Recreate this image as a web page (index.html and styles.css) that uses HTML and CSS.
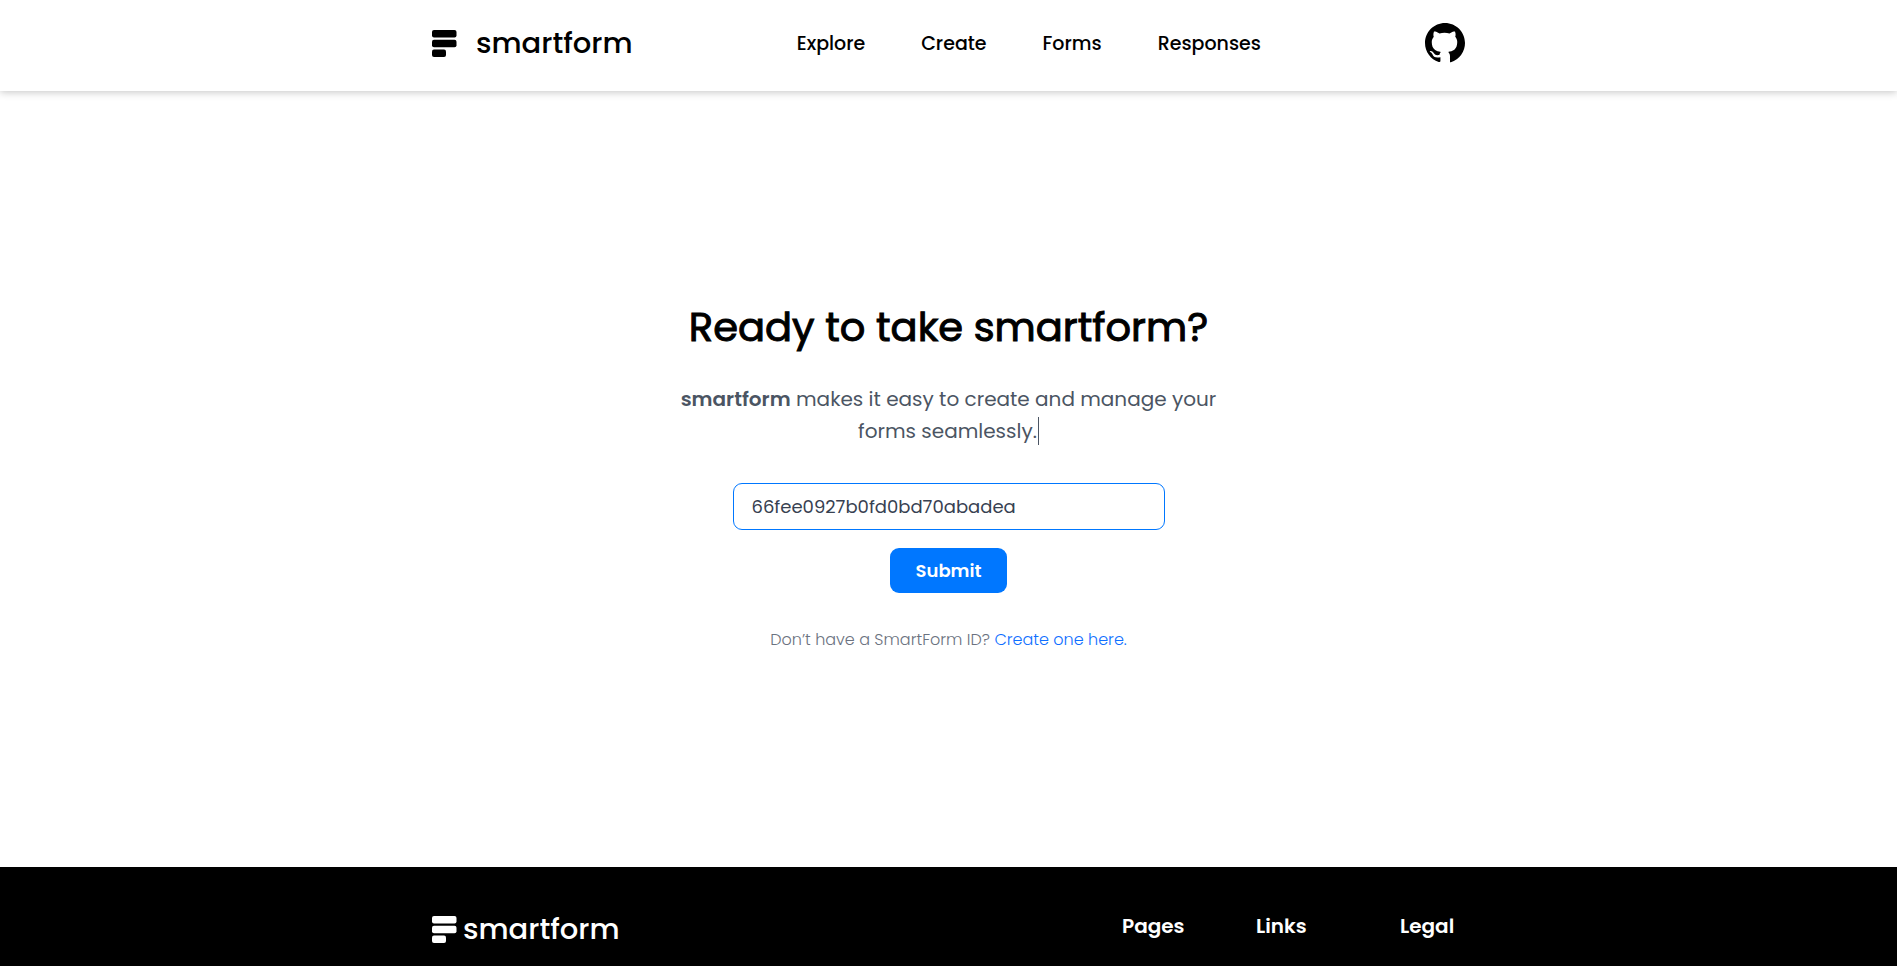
FILE: index.html
```html
<!DOCTYPE html>
<html lang="en">
<head>
<meta charset="utf-8">
<meta name="viewport" content="width=device-width, initial-scale=1">
<title>smartform</title>
<link rel="stylesheet" href="styles.css">
</head>
<body>
<header class="site-header">
  <div class="container header-row">
    <a class="brand" href="#">
      <svg class="brand-mark" viewBox="0 0 25 27" aria-hidden="true"><rect width="24.5" height="7.5" rx="2"/><rect y="9.7" width="24.5" height="7.5" rx="2"/><rect y="19.4" width="14" height="7.5" rx="2"/></svg>
      <span>smartform</span>
    </a>
    <nav class="nav" aria-label="Main">
      <a href="#">Explore</a>
      <a href="#">Create</a>
      <a href="#">Forms</a>
      <a href="#">Responses</a>
    </nav>
    <a class="github" href="#" aria-label="GitHub">
      <svg viewBox="0 0 16 16" aria-hidden="true"><path d="M8 0C3.58 0 0 3.58 0 8c0 3.54 2.29 6.53 5.47 7.59.4.07.7-.1.7-.38V13.7c-2.2.4-2.85-.4-3.05-.9-.11-.28-.5-.9-.84-1.1-.3-.15-.68-.5-.01-.52.63-.01 1.08.58 1.23.82.72 1.21 1.87.87 2.33.66.07-.52.28-.87.51-1.07-1.78-.2-3.64-.89-3.64-3.95 0-.87.31-1.59.82-2.15-.08-.2-.36-1.02.08-2.12 0 0 .67-.21 2.2.82.64-.18 1.32-.27 2-.27s1.36.09 2 .27c1.53-1.04 2.2-.82 2.2-.82.44 1.1.16 1.92.08 2.12.51.56.82 1.27.82 2.15 0 3.07-1.87 3.75-3.65 3.95.29.25.74.73.74 1.48v2.2c0 .21-.05.46.35.38A8.01 8.01 0 0 0 16 8c0-4.42-3.58-8-8-8z"/></svg>
    </a>
  </div>
</header>
<main class="main">
  <section class="hero">
    <h1 class="title">Ready to take smartform?</h1>
    <p class="lead"><strong>smartform</strong> makes it easy to create and manage your forms seamlessly.<span class="caret"></span></p>
    <form class="form">
      <input class="field" type="text" aria-label="SmartForm ID" value="66fee0927b0fd0bd70abadea" spellcheck="false">
      <button class="submit" type="submit">Submit</button>
    </form>
    <p class="note">Don’t have a SmartForm ID? <a href="#">Create one here.</a></p>
  </section>
</main>
<footer class="site-footer">
  <div class="container footer-row">
    <a class="brand brand-footer" href="#">
      <svg class="brand-mark" viewBox="0 0 25 27" aria-hidden="true"><rect width="24.5" height="7.5" rx="2"/><rect y="9.7" width="24.5" height="7.5" rx="2"/><rect y="19.4" width="14" height="7.5" rx="2"/></svg>
      <span>smartform</span>
    </a>
    <div class="footer-links">
      <h2>Pages</h2>
      <h2>Links</h2>
      <h2>Legal</h2>
    </div>
  </div>
</footer>
</body>
</html>
```

FILE: styles.css
```css
* { box-sizing: border-box; }
body {
  margin: 0;
  min-height: 100vh;
  display: flex;
  flex-direction: column;
  background: #fff;
  color: #000;
  font-family: Poppins, Inter, "Open Sans", sans-serif;
}
a { color: inherit; text-decoration: none; }
h1, h2, p { margin: 0; }
.container {
  width: 100%;
  max-width: 1065px;
  margin: 0 auto;
  padding: 0 16px;
}
.site-header {
  padding: 23px 0 28px;
  box-shadow: 0 1px 8px rgba(0, 0, 0, 0.24);
}
.header-row {
  display: flex;
  align-items: center;
  justify-content: space-between;
}
.brand {
  display: flex;
  align-items: center;
  gap: 19px;
  font-size: 29px;
  line-height: 36px;
  font-weight: 500;
}
.brand-mark { width: 25px; height: 27px; fill: currentColor; }
.nav {
  display: flex;
  gap: 56px;
  padding-top: 2px;
  font-size: 19px;
  line-height: 28px;
  font-weight: 500;
}
.github svg { display: block; width: 40px; height: 40px; }
.main {
  flex: 1;
  display: flex;
  align-items: center;
  justify-content: center;
  padding: 32px 16px 38px;
}
.hero {
  width: 100%;
  max-width: 576px;
  display: flex;
  flex-direction: column;
  align-items: center;
  text-align: center;
}
.title {
  font-size: 40px;
  line-height: 52px;
  font-weight: 400;
  -webkit-text-stroke: 1px currentColor;
}
.lead {
  margin-top: 30px;
  color: #4b5563;
  font-size: 20px;
  line-height: 32px;
}
.lead strong { font-weight: 600; }
.caret {
  display: inline-block;
  height: 28px;
  margin-left: 1px;
  border-left: 1px solid #4b5563;
  vertical-align: -7px;
}
.form {
  width: 75%;
  margin-top: 36px;
  display: flex;
  flex-direction: column;
  align-items: center;
  gap: 18px;
}
.field {
  width: 100%;
  padding: 9px 18px;
  border: 1px solid #0077ff;
  border-radius: 9px;
  outline: 0;
  background: #fff;
  color: #374151;
  font: inherit;
  font-size: 18px;
  line-height: 27px;
}
.submit {
  padding: 9px 26px;
  border: 0;
  border-radius: 9px;
  background: #0077ff;
  color: #fff;
  font: inherit;
  font-size: 18px;
  line-height: 27px;
  font-weight: 600;
}
.note {
  margin-top: 35px;
  color: #6b7280;
  font-size: 16px;
  line-height: 24px;
  font-weight: 300;
}
.note a { color: #0f6fff; }
.site-footer {
  min-height: 99px;
  padding: 44px 0 19px;
  background: #000;
  color: #fff;
}
.footer-row {
  display: flex;
  align-items: flex-start;
  justify-content: space-between;
}
.brand-footer { gap: 6px; }
.footer-links {
  width: 343px;
  display: grid;
  grid-template-columns: 134px 144px 1fr;
}
.footer-links h2 { font-size: 20px; line-height: 30px; font-weight: 600; }
```
